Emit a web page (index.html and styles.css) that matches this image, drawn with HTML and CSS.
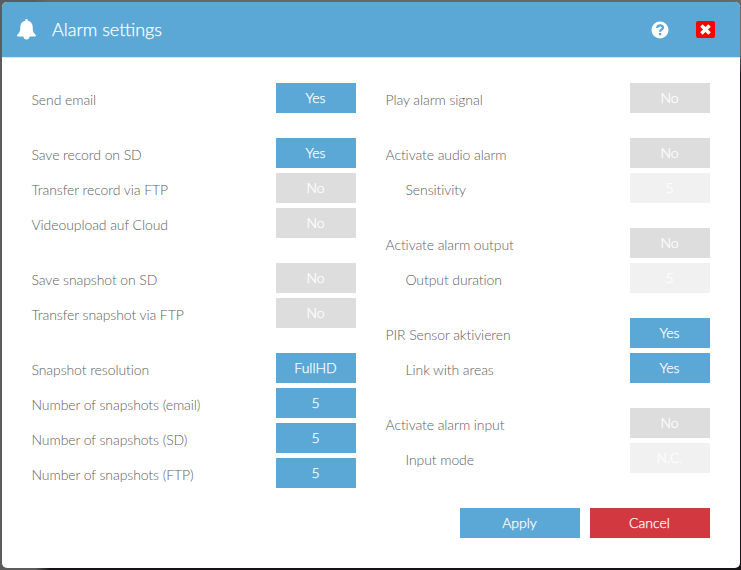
FILE: index.html
```
<!DOCTYPE html>
<html lang="en"><head><meta charset="utf-8"><title>Alarm settings</title><link rel="stylesheet" href="styles.css"></head>
<body>
<main class="dialog">
<header class="header">
<svg class="bell" viewBox="0 0 19 21"><path d="M9.500 0c.8 0 1.300.6 1.300 1.300v.5c3.200.7 4.900 3 4.900 6.200 0 4.500 1 6.200 3.100 7.900.5.500.2 1.600-.7 1.600H.9c-.9 0-1.200-1.100-.7-1.600C2.300 14.200 3.300 12.500 3.300 8c0-3.200 1.700-5.500 4.900-6.200v-.5C8.200.6 8.700 0 9.500 0zM6.500 17.500h6c0 1.800-1.200 3-3 3s-3-1.200-3-3z"/></svg>
<h1 class="title">Alarm settings</h1>
<svg class="help" viewBox="0 0 18 18"><circle cx="9" cy="9" r="8.500" fill="#fff"/><path d="M6.100 6.800C6.500 3.400 11.900 3.500 11.900 6.800C11.900 8.900 9.100 8.500 9.100 10.700" fill="none" stroke="#5ba8d6" stroke-width="2.300"/><path d="M7.900 12h2.400v2.300H7.900z" fill="#5ba8d6"/></svg>
<button class="close" aria-label="Close"><svg viewBox="0 0 10 10"><path d="M1.300 1.300l7.400 7.400m0-7.400l-7.400 7.400" stroke="#fff" stroke-width="3.200"/></svg></button>
</header>
<div class="columns">
<section class="column">
<div class="group"><div class="row"><span>Send email</span><button class="value on">Yes</button></div></div>
<div class="group"><div class="row"><span>Save record on SD</span><button class="value on">Yes</button></div><div class="row"><span>Transfer record via FTP</span><button class="value">No</button></div><div class="row"><span>Videoupload auf Cloud</span><button class="value">No</button></div></div>
<div class="group"><div class="row"><span>Save snapshot on SD</span><button class="value">No</button></div><div class="row"><span>Transfer snapshot via FTP</span><button class="value">No</button></div></div>
<div class="group"><div class="row"><span>Snapshot resolution</span><button class="value on">FullHD</button></div><div class="row"><span>Number of snapshots (email)</span><button class="value on">5</button></div><div class="row"><span>Number of snapshots (SD)</span><button class="value on">5</button></div><div class="row"><span>Number of snapshots (FTP)</span><button class="value on">5</button></div></div>
</section>
<section class="column">
<div class="group"><div class="row"><span>Play alarm signal</span><button class="value">No</button></div></div>
<div class="group"><div class="row"><span>Activate audio alarm</span><button class="value">No</button></div><div class="row sub"><span>Sensitivity</span><button class="value faint">5</button></div></div>
<div class="group"><div class="row"><span>Activate alarm output</span><button class="value">No</button></div><div class="row sub"><span>Output duration</span><button class="value faint">5</button></div></div>
<div class="group"><div class="row"><span>PIR Sensor aktivieren</span><button class="value on">Yes</button></div><div class="row sub"><span>Link with areas</span><button class="value on">Yes</button></div></div>
<div class="group"><div class="row"><span>Activate alarm input</span><button class="value">No</button></div><div class="row sub"><span>Input mode</span><button class="value faint">N.C.</button></div></div>
</section>
</div>
<footer class="footer"><button class="action">Apply</button><button class="action cancel">Cancel</button></footer>
</main>
</body></html>
```
FILE: styles.css
```
* { box-sizing: border-box; }
body { margin: 0; height: 570px; padding: 2px 1px 2px 2px; overflow: hidden; background: linear-gradient(90deg, #5c5c5c 35px, transparent 50px), linear-gradient(#686868 55px, #151316 75px); font: 300 14px/30px Lato, sans-serif; color: #606060; }
button { font: inherit; border: 0; padding: 0; }
.dialog { height: 566px; background: #fff; border-radius: 5px; overflow: hidden; }
.header { height: 56px; background: #5ba8d6; border-bottom: 1px solid #e5e5e5; display: flex; align-items: center; padding: 0 24px 0 15px; color: #fff; }
.bell { width: 19px; height: 21px; margin-top: -1px; fill: #fff; }
.title { margin: -1px auto 0 16px; font-size: 18px; font-weight: 300; line-height: 30px; -webkit-text-stroke: 0.250px #fff; }
.help { width: 18px; height: 18px; margin: 0 27px 0 0; }
.close { width: 19px; height: 17px; margin-right: 1px; background: #f00; border-radius: 2px; display: grid; place-items: center; }
.close svg { width: 11px; height: 11px; }
.columns { display: flex; gap: 30px; padding: 25px 0 0 30px; }
.column { width: 324px; display: flex; flex-direction: column; gap: 25px; }
.group { display: grid; gap: 5px; }
.row { display: flex; justify-content: space-between; height: 30px; }
.row span { padding-top: 2px; margin-left: -0.500px; letter-spacing: -0.090px; }
.sub { padding-left: 20px; }
.value, .action { padding-right: 1px; color: #fff; -webkit-text-stroke: 0.250px #fff; }
.value { width: 80px; height: 30px; background: #ddd; }
.on { background: #5ba8d6; }
.faint { background: #f1f1f1; }
.footer { display: flex; justify-content: flex-end; gap: 10px; padding: 20px 30px 0 0; }
.action { width: 120px; height: 30px; background: #5ba8d6; }
.cancel { background: #d13840; }
```
